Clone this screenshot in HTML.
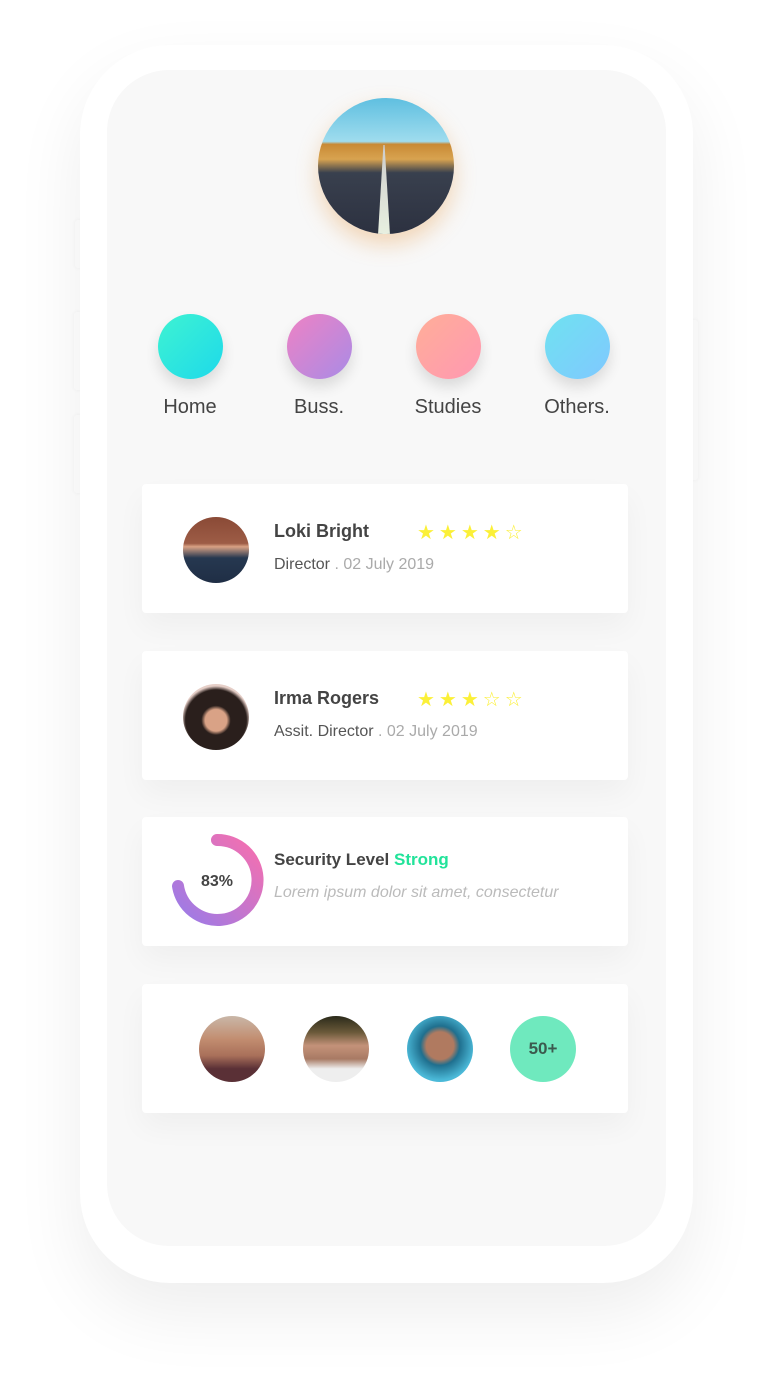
<!DOCTYPE html>
<html><head><meta charset="utf-8"><style>
*{margin:0;padding:0;box-sizing:border-box}
body{width:771px;height:1388px;background:#fff;position:relative;overflow:hidden;font-family:"Liberation Sans",sans-serif;color:#444}
.abs{position:absolute}
.frame{left:80px;top:45px;width:613px;height:1238px;border-radius:90px;background:#fff;box-shadow:0 30px 70px rgba(0,0,0,.07)}
.screen{left:107px;top:70px;width:559px;height:1176px;border-radius:62px;background:#f8f8f8}
.btn{background:#fff;border-radius:3px;box-shadow:0 0 4px rgba(0,0,0,.05)}
.cat{width:65px;height:65px;border-radius:50%;box-shadow:0 8px 14px rgba(0,0,0,.12)}
.lbl{font-size:20px;color:#444;text-align:center;width:120px}
.card{left:142px;width:486px;height:129px;background:#fff;border-radius:4px;box-shadow:0 14px 30px rgba(0,0,0,.04)}
.av{width:66px;height:66px;border-radius:50%;overflow:hidden}
.name{font-size:18px;font-weight:bold;color:#444}
.sub{font-size:16px;color:#555}
.sub span{color:#aaa}
.stars{font-size:20px;color:#fbf038;letter-spacing:4px}
</style></head><body>
<div class="abs btn" style="left:75px;top:220px;width:8px;height:48px"></div>
<div class="abs btn" style="left:74px;top:312px;width:9px;height:78px"></div>
<div class="abs btn" style="left:74px;top:415px;width:9px;height:78px"></div>
<div class="abs btn" style="left:690px;top:320px;width:8px;height:160px"></div>
<div class="abs frame"></div>
<div class="abs screen"></div>

<div class="abs" style="left:318px;top:98px;width:136px;height:136px;border-radius:50%;overflow:hidden;box-shadow:0 10px 22px rgba(230,150,60,.35);background:linear-gradient(180deg,#5fbfe0 0%,#9fdcee 32%,#c98a35 34%,#d8a350 45%,#39404e 55%,#2c3140 100%)">
<div class="abs" style="left:60px;top:47px;width:12px;height:90px;background:linear-gradient(180deg,#ccc,#e8f0e0);clip-path:polygon(45% 0,55% 0,100% 100%,0 100%)"></div>
</div>

<div class="abs cat" style="left:158px;top:314px;background:linear-gradient(135deg,#3ef3d2,#1ed9ea)"></div>
<div class="abs cat" style="left:287px;top:314px;background:linear-gradient(135deg,#ee82c4,#a98be6)"></div>
<div class="abs cat" style="left:416px;top:314px;background:linear-gradient(135deg,#ffae98,#ff98b2)"></div>
<div class="abs cat" style="left:545px;top:314px;background:linear-gradient(135deg,#6fe2f0,#80c8ff)"></div>
<div class="abs lbl" style="left:130px;top:396px">Home</div>
<div class="abs lbl" style="left:259px;top:396px">Buss.</div>
<div class="abs lbl" style="left:388px;top:396px">Studies</div>
<div class="abs lbl" style="left:517px;top:396px">Others.</div>

<div class="abs card" style="top:484px"></div>
<div class="abs av" style="left:183px;top:517px;background:linear-gradient(180deg,#8a4a36 0%,#9d5c46 40%,#d9a184 45%,#263850 62%,#1f2e45 100%)"></div>
<div class="abs name" style="left:274px;top:521px">Loki Bright</div>
<div class="abs stars" style="left:417px;top:520px">★★★★☆</div>
<div class="abs sub" style="left:274px;top:556px">Director <span>. 02 July 2019</span></div>

<div class="abs card" style="top:651px"></div>
<div class="abs av" style="left:183px;top:684px;background:radial-gradient(circle at 50% 55%,#d9a286 0 22%,#2a1f1c 30% 62%,#e6cfc8 70%)"></div>
<div class="abs name" style="left:274px;top:688px">Irma Rogers</div>
<div class="abs stars" style="left:417px;top:687px">★★★☆☆</div>
<div class="abs sub" style="left:274px;top:723px">Assit. Director <span>. 02 July 2019</span></div>

<div class="abs card" style="top:817px"></div>
<svg class="abs" style="left:167px;top:830px" width="100" height="100" viewBox="0 0 100 100">
<defs><linearGradient id="g" x1="1" y1="0" x2="0" y2="1"><stop offset="0" stop-color="#f76fae"/><stop offset="1" stop-color="#9a7be8"/></linearGradient></defs>
<path d="M50 10 A40 40 0 1 1 11 56" fill="none" stroke="url(#g)" stroke-width="12" stroke-linecap="round"/>
<text x="50" y="56" text-anchor="middle" font-family="Liberation Sans" font-weight="bold" font-size="16" fill="#444">83%</text>
</svg>
<div class="abs name" style="left:274px;top:850px;font-size:17px">Security Level <span style="color:#22e39a">Strong</span></div>
<div class="abs" style="left:274px;top:884px;font-size:16px;font-style:italic;color:#bbb">Lorem ipsum dolor sit amet, consectetur</div>

<div class="abs card" style="top:984px"></div>
<div class="abs av" style="left:199px;top:1016px;background:linear-gradient(180deg,#c9b7a8 0%,#c28d70 35%,#a9705a 60%,#5a3036 80%)"></div>
<div class="abs av" style="left:303px;top:1016px;background:linear-gradient(180deg,#2a2a1a 0%,#6b5a3a 25%,#c49279 45%,#a87a64 65%,#eee 80%)"></div>
<div class="abs av" style="left:407px;top:1016px;background:radial-gradient(circle at 50% 45%,#b07a60 0 28%,#1f6f8e 40%,#4bb9d8 70%)"></div>
<div class="abs av" style="left:510px;top:1016px;background:#6fe9be;text-align:center;line-height:66px;font-weight:bold;font-size:17px;color:#3b5a4e">50+</div>
</body></html>
